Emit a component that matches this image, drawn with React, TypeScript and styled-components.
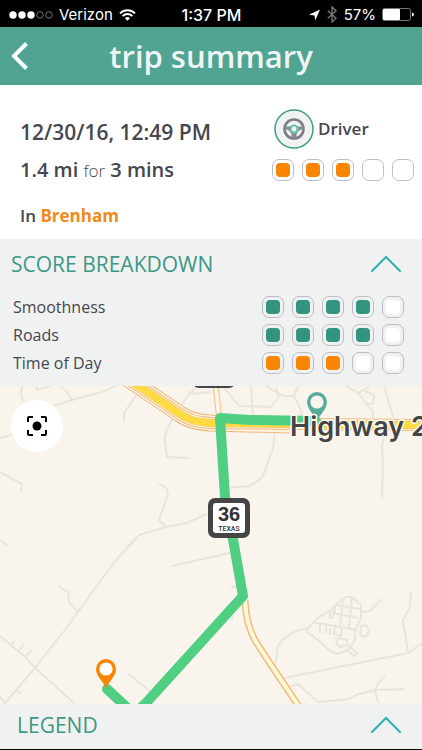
import React from "react";
import styled, { createGlobalStyle } from "styled-components";

const GlobalStyle = createGlobalStyle`
  *, *::before, *::after { box-sizing: border-box; }
  body { margin: 0; background: #000; font-family: "Open Sans", "Noto Sans", sans-serif; color: #46464f; }
  button { font: inherit; color: inherit; border: 0; background: none; padding: 0; cursor: pointer; }
  h1, h2, p, dl, dd, dt { margin: 0; font-weight: inherit; }
  svg { display: block; }
`;

const Screen = styled.div`
  min-height: 100vh;
  display: flex;
  flex-direction: column;
  background: #fff;
  border-bottom: 1px solid #000;
`;

const StatusBar = styled.div`
  display: grid;
  grid-template-columns: 1fr auto 1fr;
  align-items: center;
  height: 27px;
  padding: 2px 8px 0 9px;
  background: #000;
  color: #fff;
  font-family: Inter, "Liberation Sans", sans-serif;
  font-size: 15px;
  line-height: 20px;
`;

const StatusGroup = styled.div<{ $end?: boolean }>`
  display: flex;
  align-items: center;
  gap: 6px;
  justify-content: ${(p) => (p.$end ? "flex-end" : "flex-start")};
`;

const Clock = styled.time`
  font-size: 16px;
  font-weight: 500;
`;

const Header = styled.header`
  display: grid;
  grid-template-columns: 48px 1fr 48px;
  align-items: center;
  height: 58px;
  background: #51a392;
`;

const BackButton = styled.button`
  display: flex;
  align-items: center;
  height: 58px;
  padding-left: 11px;
`;

const Title = styled.h1`
  text-align: center;
  font-size: 31px;
  line-height: 40px;
  font-weight: 600;
  color: #eef6f5;
`;

const Trip = styled.section`
  display: flex;
  justify-content: space-between;
  padding: 24px 8px 11px 20px;
`;

const TripFacts = styled.div`
  display: flex;
  flex-direction: column;
  padding-top: 4px;
`;

const TripLine = styled.p<{ $size: "large" | "medium" | "small" }>`
  font-size: ${(p) => ({ large: 21, medium: 20, small: 17 })[p.$size]}px;
  line-height: ${(p) => (p.$size === "small" ? 24 : 38)}px;
  margin-top: ${(p) => (p.$size === "small" ? 15 : 0)}px;
  font-weight: 600;
`;

const Light = styled.span`
  font-weight: 300;
  font-size: 17px;
  line-height: 20px;
`;

const Place = styled.strong`
  color: #ef8a1b;
  font-weight: 700;
`;

const Role = styled.div`
  display: flex;
  flex-direction: column;
  gap: 10px;
`;

const RoleName = styled.div`
  display: flex;
  align-items: center;
  gap: 4px;
  padding-left: 2px;
  font-size: 17px;
  line-height: 24px;
  font-weight: 600;
`;

const Meter = styled.div`
  display: flex;
  gap: 8px;
`;

const Box = styled.span<{ $fill: string }>`
  display: grid;
  place-items: center;
  width: 22px;
  height: 22px;
  border: 1px solid #bdbdc8;
  border-radius: 7px;
  &::before {
    content: "";
    width: 14px;
    height: 14px;
    border-radius: 4px;
    background: ${(p) => p.$fill};
  }
`;

const Breakdown = styled.section`
  background: #f0f2f2;
  padding-bottom: 11px;
`;

const PanelToggle = styled.button<{ $inset: number }>`
  display: flex;
  align-items: center;
  justify-content: space-between;
  width: 100%;
  padding: 0 20px 0 ${(p) => p.$inset}px;
  text-align: left;
`;

const PanelTitle = styled.span`
  font-size: 21px;
  line-height: 30px;
  color: #3f9784;
`;

const BreakdownHead = styled.h2`
  padding: 10px 0 16px;
`;

const Scores = styled.dl`
  display: grid;
  gap: 4px;
  padding: 0 18px 0 13px;
`;

const ScoreRow = styled.div`
  display: flex;
  justify-content: space-between;
  align-items: center;
  font-size: 16px;
  line-height: 24px;
`;

const MapArea = styled.main`
  position: relative;
  flex: 1 0 318px;
  background: #f9f5ed;
  overflow: hidden;
`;

const MapDrawing = styled.svg`
  position: absolute;
  inset: 0;
  width: 100%;
  height: 100%;
`;

const RecenterButton = styled.button`
  position: absolute;
  top: 14px;
  left: 11px;
  display: grid;
  place-items: center;
  width: 52px;
  height: 52px;
  border-radius: 50%;
  background: #fff;
`;

const Legend = styled.footer`
  background: #f0f2f2;
  padding: 6px 0 9px;
`;

const ORANGE = "#f98500";
const GREEN = "#33957f";

function Rating({ value, color, label }: { value: number; color: string; label: string }) {
  return (
    <Meter role="img" aria-label={`${label}: ${value} of 5`}>
      {[1, 2, 3, 4, 5].map((n) => (
        <Box key={n} $fill={n <= value ? color : "#fff"} />
      ))}
    </Meter>
  );
}

function Chevron() {
  return (
    <svg width="32" height="18" viewBox="0 0 32 18" fill="none" stroke="#2fb0b0" strokeWidth="2" strokeLinecap="round" aria-hidden="true">
      <path d="M2 16 16 2l14 14" />
    </svg>
  );
}

function Signal() {
  return (
    <svg width="44" height="10" viewBox="0 0 44 10" aria-label="Signal strength" role="img">
      {[0, 1, 2].map((i) => (
        <circle key={i} cx={4 + i * 9} cy="5" r="3.7" fill="#fff" />
      ))}
      {[3, 4].map((i) => (
        <circle key={i} cx={4 + i * 9} cy="5" r="3.3" fill="none" stroke="#8a8a8a" strokeWidth="0.8" />
      ))}
    </svg>
  );
}

function Wifi() {
  return (
    <svg width="17" height="12" viewBox="0 0 17 12" fill="none" stroke="#fff" strokeWidth="1.9" aria-hidden="true">
      <path d="M1 4.4a10.6 10.6 0 0 1 15 0M3.6 7.1a6.9 6.9 0 0 1 9.8 0" />
      <path d="M8.5 11.8 5.9 9.2a3.7 3.7 0 0 1 5.2 0z" fill="#fff" stroke="none" />
    </svg>
  );
}

function SteeringWheel() {
  return (
    <svg width="40" height="40" viewBox="0 0 40 40" fill="none" aria-hidden="true">
      <circle cx="20" cy="20" r="19" fill="#f1f3f3" stroke="#3f9c86" strokeWidth="1.5" />
      <circle cx="20" cy="20" r="9.500" stroke="#7d7c87" strokeWidth="2.600" />
      <path d="M11 17.500h18v3q-5 0-6.500 5V29h-5v-3.500q-1.500-5-6.500-5z" fill="#8b8a94" />
      <circle cx="20" cy="20" r="3.500" fill="#f4f8f7" stroke="#68c3ac" strokeWidth="2.200" />
    </svg>
  );
}

function Pin({ x, y, color, hole }: { x: number; y: number; color: string; hole: string }) {
  return (
    <g transform={`translate(${x} ${y})`}>
      <path d="M0 20C-1.5 13-10 8-10 0a10 10 0 0 1 20 0C10 8 1.5 13 0 20z" fill={color} />
      <circle r="6.6" fill={hole} />
    </g>
  );
}

const streets = [
  "M22 386 21 393 23 402", "M36 386 37 390 53 385", "M60 385 67 392 72 400",
  "M53 406 72 400 102 392 118 385", "M137 394 124 413 124 421", "M0 438 12 435",
  "M0 472 22 484 21 492", "M0 540 8 546", "M203 382 189 394 180 407", "M189 394 211 392",
  "M173 419Q163 434 165 442L167 457 189 458", "M159 484Q168 487 168 494L159 520 166 527",
  "M207 514 187 523 166 527 139 535 130 545", "M134 540 112 565 78 612 65 630 35 668 5 703 0 697",
  "M58 586 68 592 69 602 78 612", "M0 636 25 657 35 668 75 704",
  "M11 645 14 641", "M19 651 24 644", "M25 657 32 650", "M16 690 21 694",
  "M172 566 230 553", "M127 673 150 691", "M231 588 238 585", "M232 620V616",
  "M224 387 239 406 271 407 279 397 276 387", "M251 386 253 415",
  "M266 386 283 396 294 396 298 386", "M294 396 301 410 302 416",
  "M228 488 249 486Q263 480 265 470L273 448 275 430",
  "M346 386 358 393 373 412 373 418", "M358 393 369 387M365 391 374 395 373 403 366 405",
  "M384 386 393 417", "M385 430 382 447 383 463 382 498",
  "M411 592 410 607 403 620 408 653 422 643", "M408 653 284 678",
  "M289 687 298 684 318 702 349 699 356 695 375 690 404 689",
  "M385 676 379 682 375 690 378 703", "M273 665Q278 662 277 648Q285 632 308 628",
  "M308 628 319 617 331 610 341 600 346 597 352 597 361 605 361 618 355 630 355 640 348 650 338 654 330 651 318 640 307 632Z",
  "M361 612 370 611 382 599", "M361 626 366 625 369 631 366 637 360 635Z",
  "M335 605 360 609", "M332 613 358 618", "M313 622 357 630", "M343 599 340 627",
  "M352 597 349 628", "M335 606 335 614", "M330 611 330 618H333V610",
  "M335 626 342 628 341 636 334 634Z", "M338 638 347 640 348 645 340 647 336 643Z",
  "M349 645 357 653 354 656 347 650", "M320 624V633", "M326 625V633", "M330 628V635",
];

const highway = "M128 379 180 414Q190 422 211 423L432 425";
const westCarriageways = "M128 379 180 414Q190 422 211 423L290 425";
const farmRoad = "M245 600Q246 625 256 642L271 665 300 708";

function TripMap() {
  return (
    <MapDrawing viewBox="0 386 422 318" preserveAspectRatio="xMidYMid slice" role="img" aria-label="Map of the trip">
      <path d={streets.join("")} fill="none" stroke="#e8e5df" strokeWidth="2" strokeLinejoin="round" />
      <g fill="none">
        <path d="M215 380 219 416" stroke="#f3bd83" strokeWidth="6" />
        <path d="M215 380 219 416" stroke="#fdf6e4" strokeWidth="4" />
        <path d={westCarriageways} stroke="#f0b67c" strokeWidth="17" />
        <path d={westCarriageways} stroke="#fcf4e0" strokeWidth="15" />
        <path d={highway} stroke="#f0b67c" strokeWidth="12" />
        <path d={highway} stroke="#fcf4e0" strokeWidth="10" />
        <path d={highway} stroke="#f2b958" strokeWidth="8" />
        <path d={highway} stroke="#fedb41" strokeWidth="7" />
        <path d={farmRoad} stroke="#f0bd80" strokeWidth="7" />
        <path d={farmRoad} stroke="#fff8d8" strokeWidth="4" />
        <path
          d="M316 421 250 420 220 418 225 497 234 545 243 596 145 704 134 714 107 689"
          stroke="#50ce82" strokeWidth="10" strokeLinejoin="round" strokeLinecap="round"
        />
      </g>
      <rect x="193" y="348" width="42" height="40" rx="6" fill="#454545" />
      <rect x="208" y="498" width="42" height="40" rx="7" fill="#454545" />
      <rect x="213" y="503" width="32" height="30" rx="3" fill="#fff" />
      <g textAnchor="middle" fill="#333">
        <text x="229" y="521" fontSize="20" fontWeight="700" fontFamily="Liberation Sans, sans-serif">36</text>
        <text x="229" y="531" fontSize="7" fontWeight="500" fontFamily="Roboto, sans-serif">TEXAS</text>
      </g>
      <Pin x={317} y={402} color="#5aac9a" hole="#f9f5ed" />
      <text
        x="290" y="436" fontSize="27" fontWeight="600" fontFamily="Inter, sans-serif"
        fill="#444" stroke="#fbf8f2" strokeWidth="3" strokeLinejoin="round" paintOrder="stroke"
      >
        Highway 2
      </text>
      <Pin x={106} y={669} color={ORANGE} hole="#fff" />
    </MapDrawing>
  );
}

export default function App() {
  return (
    <>
      <GlobalStyle />
      <Screen>
        <StatusBar>
          <StatusGroup>
            <Signal />
            <span>Verizon</span>
            <Wifi />
          </StatusGroup>
          <Clock>1:37 PM</Clock>
          <StatusGroup $end>
            <svg width="11" height="12" viewBox="0 0 11 12" aria-hidden="true">
              <path d="M11 .5 6.2 11.5 5.6 6.4 0 5.8z" fill="#fff" />
            </svg>
            <svg width="12" height="17" viewBox="0 0 12 17" fill="none" stroke="#747474" strokeWidth="1.4" aria-hidden="true">
              <path d="M1.800 4.8 10 12.2 6 16V1l4 3.8L1.800 12.2" />
            </svg>
            <span>57%</span>
            <svg width="32" height="13" viewBox="0 0 32 13" role="img" aria-label="Battery">
              <rect x=".5" y=".5" width="28" height="12" rx="2" fill="none" stroke="#777" />
              <rect x="1" y="1" width="17" height="11" rx="1" fill="#fff" />
              <path d="M30 4.5q2 .5 2 2t-2 2z" fill="#fff" />
            </svg>
          </StatusGroup>
        </StatusBar>

        <Header>
          <BackButton aria-label="Back">
            <svg width="18" height="28" viewBox="0 0 18 28" fill="none" stroke="#fff" strokeWidth="4" aria-hidden="true">
              <path d="M15.500 1.500 3 14l12.500 12.500" />
            </svg>
          </BackButton>
          <Title>trip summary</Title>
        </Header>

        <Trip>
          <TripFacts>
            <TripLine $size="large">12/30/16, 12:49 PM</TripLine>
            <TripLine $size="medium">
              1.4 mi <Light>for</Light> 3 mins
            </TripLine>
            <TripLine $size="small">
              In <Place>Brenham</Place>
            </TripLine>
          </TripFacts>
          <Role>
            <RoleName>
              <SteeringWheel />
              Driver
            </RoleName>
            <Rating value={3} color={ORANGE} label="Driver" />
          </Role>
        </Trip>

        <Breakdown>
          <BreakdownHead>
            <PanelToggle $inset={11} aria-expanded="true">
              <PanelTitle>SCORE BREAKDOWN</PanelTitle>
              <Chevron />
            </PanelToggle>
          </BreakdownHead>
          <Scores>
            {[
              { name: "Smoothness", value: 4, color: GREEN },
              { name: "Roads", value: 4, color: GREEN },
              { name: "Time of Day", value: 3, color: ORANGE },
            ].map((s) => (
              <ScoreRow key={s.name}>
                <dt>{s.name}</dt>
                <dd>
                  <Rating value={s.value} color={s.color} label={s.name} />
                </dd>
              </ScoreRow>
            ))}
          </Scores>
        </Breakdown>

        <MapArea>
          <TripMap />
          <RecenterButton aria-label="Recenter map">
            <svg width="20" height="20" viewBox="0 0 20 20" fill="none" stroke="#000" strokeWidth="2" aria-hidden="true">
              <path d="M1 6V2q0-1 1-1h4M14 1h4q1 0 1 1v4M19 14v4q0 1-1 1h-4M6 19H2q-1 0-1-1v-4" />
              <circle cx="10" cy="10" r="4.500" fill="#000" stroke="none" />
            </svg>
          </RecenterButton>
        </MapArea>

        <Legend>
          <PanelToggle $inset={17} aria-expanded="false">
            <PanelTitle>LEGEND</PanelTitle>
            <Chevron />
          </PanelToggle>
        </Legend>
      </Screen>
    </>
  );
}
